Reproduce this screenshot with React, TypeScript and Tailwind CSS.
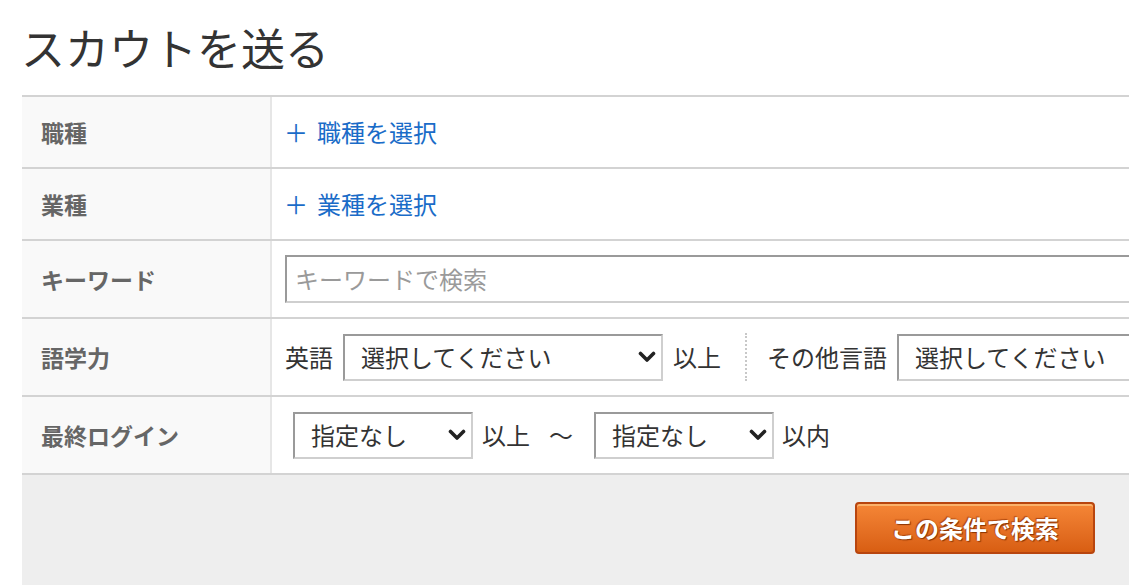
import React from "react";

const Chevron = () => (
  <svg width="18" height="14" viewBox="0 0 18 14" className="shrink-0">
    <path d="M2.5 3.5 L9 10 L15.5 3.5" fill="none" stroke="#222" strokeWidth="3.6" strokeLinecap="round" strokeLinejoin="round" />
  </svg>
);

const Select = ({ w, text }: { w: string; text: string }) => (
  <div className={`${w} h-[47px] flex items-center justify-between pl-[16px] pr-[5px] border-2 border-t-[#9a9a9a] border-l-[#9a9a9a] border-r-[#cfcfcf] border-b-[#cfcfcf] bg-white shrink-0`}>
    <span className="text-[24px] text-[#333] whitespace-nowrap">{text}</span>
    <Chevron />
  </div>
);

const Label = ({ children }: { children: React.ReactNode }) => (
  <div className="w-[250px] shrink-0 bg-[#f9f9f9] border-r-2 border-[#e6e6e6] flex items-center pl-[19px] text-[23px] font-bold text-[#666]">
    {children}
  </div>
);

export default function App() {
  return (
    <div className="w-[1129px] h-[585px] overflow-hidden bg-white" style={{ fontFamily: '"Noto Sans CJK JP", "Noto Sans", sans-serif' }}>
      <h1 className="pl-[21px] pt-[18px] h-[95px] text-[44px] leading-[58px] text-[#333] font-normal">スカウトを送る</h1>
      <div className="ml-[22px] w-[1200px] border-t-2 border-[#d3d3d3]">
        <div className="flex h-[72px] border-b-2 border-[#d3d3d3]">
          <Label>職種</Label>
          <div className="flex items-center pl-[12px] text-[24px] text-[#1a6cc8]">
            <span className="mr-[9px]">＋</span>職種を選択
          </div>
        </div>
        <div className="flex h-[72px] border-b-2 border-[#d3d3d3]">
          <Label>業種</Label>
          <div className="flex items-center pl-[12px] text-[24px] text-[#1a6cc8]">
            <span className="mr-[9px]">＋</span>業種を選択
          </div>
        </div>
        <div className="flex h-[78px] border-b-2 border-[#d3d3d3]">
          <Label>キーワード</Label>
          <div className="flex items-center pl-[13px] flex-1">
            <div className="w-full h-[48px] border-2 border-t-[#9a9a9a] border-l-[#9a9a9a] border-r-[#cfcfcf] border-b-[#cfcfcf] flex items-center pl-[8px] text-[24px] text-[#9a9a9a]">
              キーワードで検索
            </div>
          </div>
        </div>
        <div className="flex h-[78px] border-b-2 border-[#d3d3d3]">
          <Label>語学力</Label>
          <div className="flex items-center pl-[13px] text-[24px] text-[#333] whitespace-nowrap">
            <span className="mr-[10px]">英語</span>
            <Select w="w-[320px]" text="選択してください" />
            <span className="ml-[10px]">以上</span>
            <div className="ml-[24px] h-[48px] border-l-2 border-dotted border-[#c8c8c8]" />
            <span className="ml-[20px] mr-[10px]">その他言語</span>
            <Select w="w-[320px]" text="選択してください" />
          </div>
        </div>
        <div className="flex h-[78px] border-b-2 border-[#d3d3d3]">
          <Label>最終ログイン</Label>
          <div className="flex items-center pl-[21px] text-[24px] text-[#333] whitespace-nowrap">
            <Select w="w-[180px]" text="指定なし" />
            <span className="ml-[9px]">以上</span>
            <span className="ml-[19px]">～</span>
            <span className="ml-[21px]" />
            <Select w="w-[180px]" text="指定なし" />
            <span className="ml-[8px]">以内</span>
          </div>
        </div>
        <div className="h-[120px] bg-[#eeeeee] flex justify-start pl-[833px] pt-[27px]">
          <button className="w-[240px] h-[52px] rounded-[4px] border-2 border-[#b8450e] bg-gradient-to-b from-[#f58636] to-[#d85e12] text-white font-bold text-[24px] shadow-[inset_0_2px_0_#fbb26a]" style={{ textShadow: "1px 1px 1px #8a3300, -1px -1px 1px #b04a10" }}>
            この条件で検索
          </button>
        </div>
      </div>
    </div>
  );
}
